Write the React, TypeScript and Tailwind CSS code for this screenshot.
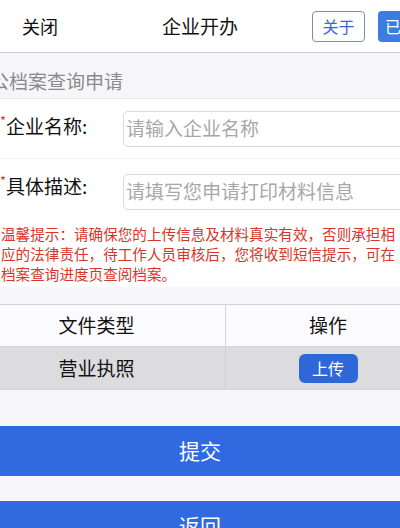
export default function App() {
  return (
    <div
      className="w-[400px] h-[528px] overflow-hidden bg-[#f7f7fa] text-[#111]"
      style={{ fontFamily: '"Noto Sans CJK SC", "Noto Sans", sans-serif' }}
    >
      {/* header */}
      <div className="h-[53px] bg-white border-b border-[#cdcdd2] flex items-center relative">
        <span className="ml-[22px] text-[18px]">关闭</span>
        <span className="absolute left-0 right-0 text-center text-[19px] pointer-events-none">企业开办</span>
        <div className="ml-auto flex items-center gap-[13px] -mr-[40px]">
          <div className="w-[53px] h-[31px] border border-[#7d8fa6] rounded-[4px] flex items-center justify-center text-[16px] text-[#2f6bd8]">
            关于
          </div>
          <div className="w-[62px] h-[31px] bg-[#3a7fe0] rounded-[4px] flex items-center justify-center text-[16px] text-white">
            已申请
          </div>
        </div>
      </div>

      {/* section title */}
      <div className="h-[46px] bg-[#f6f6f9] border-b border-[#ececf0] flex items-center overflow-hidden pt-[12px]">
        <span className="-ml-[10px] text-[19px] text-[#8a8a8e] whitespace-nowrap">公档案查询申请</span>
      </div>

      {/* form */}
      <div className="bg-white">
        <div className="h-[60px] flex items-center border-b border-[#f0f0f2]">
          <div className="w-[123px] flex items-start shrink-0 -mt-[5px]">
            <span className="text-[#d23b3b] text-[13px] leading-[14px] mt-[2px]">*</span>
            <span className="text-[19px]">企业名称:</span>
          </div>
          <div className="flex-1 h-[36px] -mr-[20px] border border-[#d9d9dc] rounded-[5px] flex items-center px-[2px] text-[19px] text-[#a7a7ab]">
            请输入企业名称
          </div>
        </div>
        <div className="h-[65px] flex items-center">
          <div className="w-[123px] flex items-start shrink-0 -mt-[10px]">
            <span className="text-[#d23b3b] text-[13px] leading-[14px] mt-[2px]">*</span>
            <span className="text-[19px]">具体描述:</span>
          </div>
          <div className="flex-1 h-[36px] -mr-[20px] border border-[#d9d9dc] rounded-[5px] flex items-center px-[2px] text-[19px] text-[#a7a7ab] whitespace-nowrap">
            请填写您申请打印材料信息
          </div>
        </div>
        <p className="px-[1px] pb-[3px] text-[14.6px] leading-[20px] text-[#d8352b] whitespace-nowrap">
          温馨提示：请确保您的上传信息及材料真实有效，否则承担相
          <br />
          应的法律责任，待工作人员审核后，您将收到短信提示，可在
          <br />
          档案查询进度页查阅档案。
        </p>
      </div>

      {/* table */}
      <div className="mt-[17px] border-t border-b border-[#d4d4d8] overflow-hidden">
        <div className="h-[42px] flex bg-[#fbfbfd] border-b border-[#d4d4d8] -ml-[32px] -mr-[30px]">
          <div className="w-[258px] border-r border-[#d4d4d8] flex items-center justify-center text-[19px]">
            文件类型
          </div>
          <div className="flex-1 flex items-center justify-center text-[19px]">操作</div>
        </div>
        <div className="h-[42px] flex bg-[#dcdcdf] -ml-[32px] -mr-[30px]">
          <div className="w-[258px] border-r border-[#cfcfd3] flex items-center justify-center text-[19px]">
            营业执照
          </div>
          <div className="flex-1 flex items-center justify-center">
            <div className="w-[59px] h-[29px] bg-[#2f67d8] rounded-[6px] flex items-center justify-center text-[16px] text-white">
              上传
            </div>
          </div>
        </div>
      </div>

      {/* buttons */}
      <div className="mt-[36px] flex flex-col gap-[25px]">
        <div className="h-[50px] bg-[#3169e0] flex items-center justify-center text-[21px] text-white">提交</div>
        <div className="h-[50px] bg-[#3169e0] flex items-center justify-center text-[21px] text-white">返回</div>
      </div>
    </div>
  );
}
